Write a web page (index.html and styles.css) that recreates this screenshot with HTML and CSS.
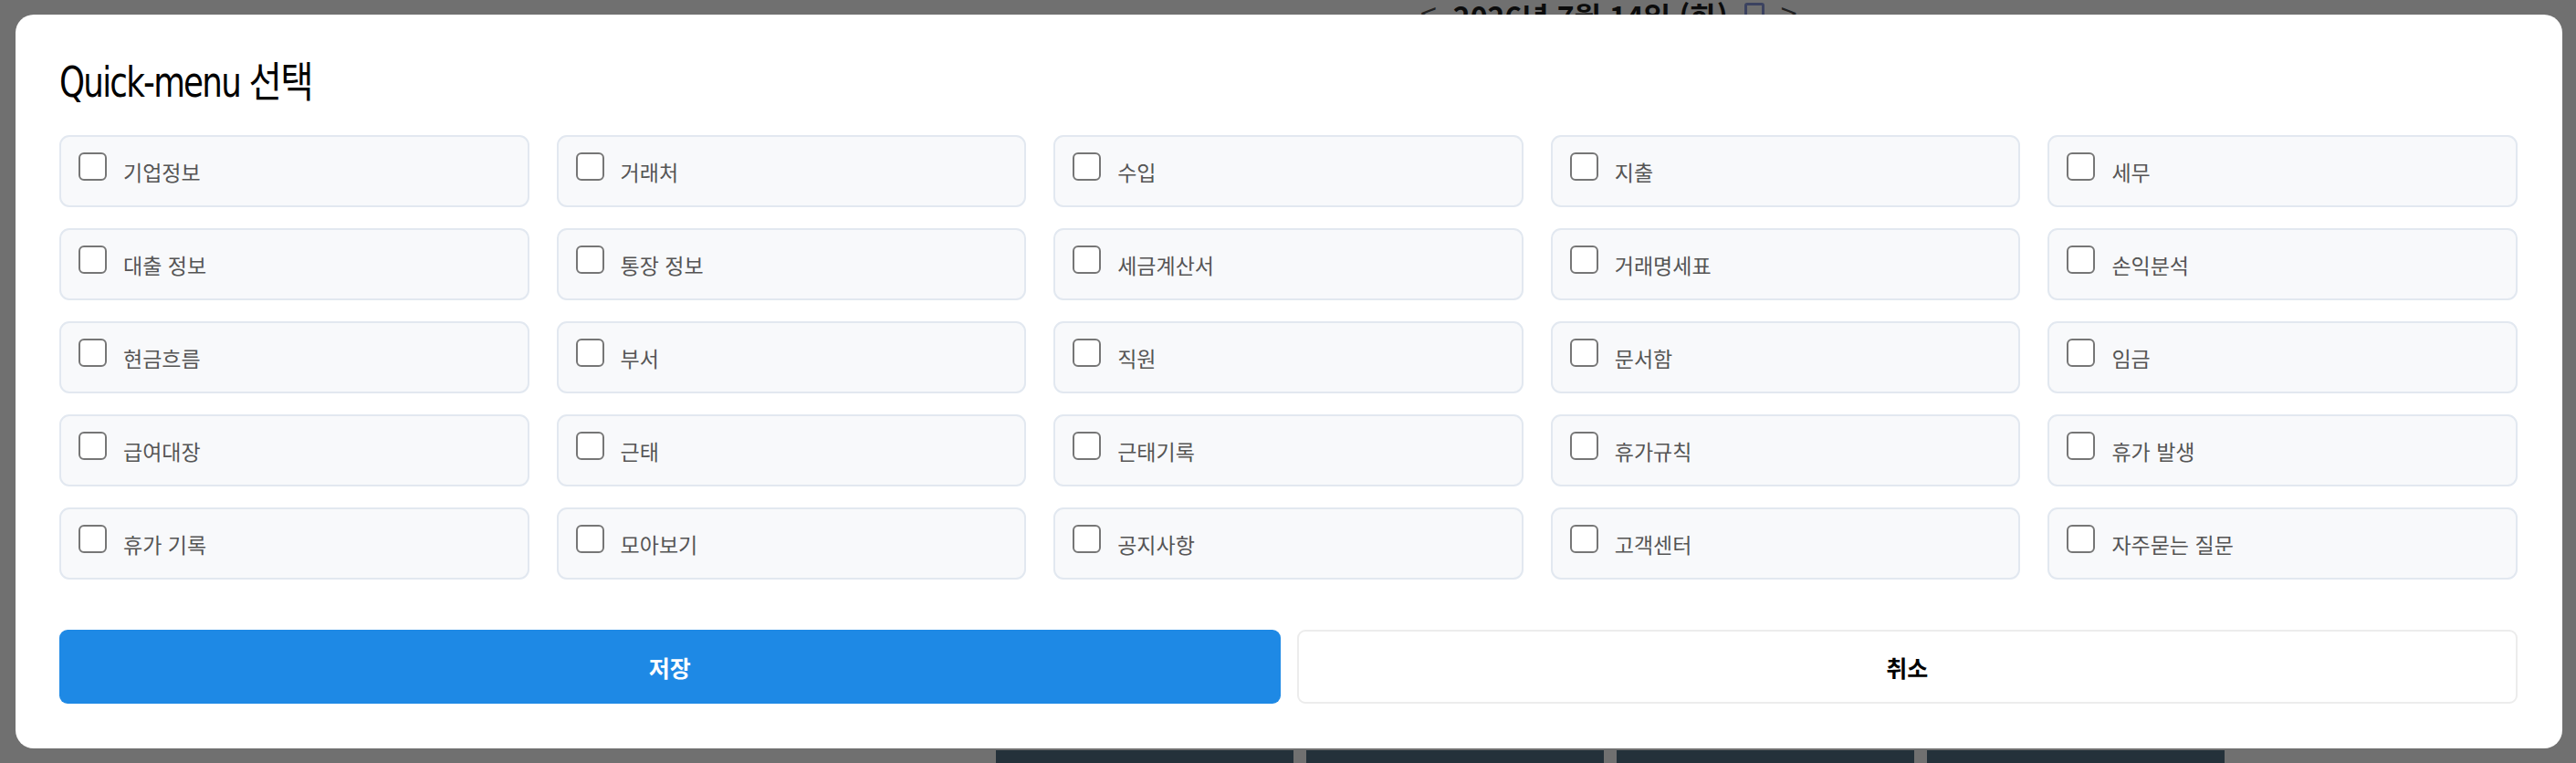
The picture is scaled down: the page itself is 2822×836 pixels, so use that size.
FILE: index.html
```html
<!DOCTYPE html>
<html lang="ko">
<head>
  <meta charset="UTF-8" />
  <meta name="viewport" content="width=device-width, initial-scale=1.0" />
  <title>Quick-menu 선택</title>
  <link rel="stylesheet" href="styles.css">
</head>
<body>
  <!-- 뒤에 깔린 화면 (어둡게 가려짐) -->
  <div class="page">
    <div class="page-header">
      <span class="nav-arrow">&lt;</span>
      <span class="page-date">2026년 7월 14일 (화)</span>
      <span class="nav-cal"></span>
      <span class="nav-arrow">&gt;</span>
    </div>
    <div class="page-footer">
      <div class="footer-box"></div>
      <div class="footer-box"></div>
      <div class="footer-box"></div>
      <div class="footer-box"></div>
    </div>
  </div>

  <div class="overlay">
    <div class="modal">
      <h2 class="modal-title">Quick-menu 선택</h2>

      <div class="menu-grid" id="menuGrid"></div>

      <div class="modal-actions">
        <button class="btn-save">저장</button>
        <button class="btn-cancel">취소</button>
      </div>
    </div>
  </div>

  <script>
    const menus = [
      "기업정보", "거래처", "수입", "지출", "세무",
      "대출 정보", "통장 정보", "세금계산서", "거래명세표", "손익분석",
      "현금흐름", "부서", "직원", "문서함", "임금",
      "급여대장", "근태", "근태기록", "휴가규칙", "휴가 발생",
      "휴가 기록", "모아보기", "공지사항", "고객센터", "자주묻는 질문"
    ];

    const grid = document.getElementById("menuGrid");
    menus.forEach((name) => {
      const item = document.createElement("label");
      item.className = "menu-item";
      item.innerHTML = `
        <input type="checkbox" />
        <span class="check-box"></span>
        <span class="menu-name">${name}</span>
      `;
      grid.appendChild(item);
    });
  </script>
</body>
</html>
```

FILE: styles.css
```css
/* 기본 */
html, body {
  margin: 0;
  height: 836px;
  overflow: hidden;
}
body {
  background-color: #707070;
  font-family: "Noto Sans CJK KR", "Noto Sans", sans-serif;
}

/* 뒤 화면 */
.page {
  height: 836px;
  display: flex;
  flex-direction: column;
  justify-content: space-between;
}
.page-header {
  display: flex;
  align-items: flex-start;
  gap: 18px;
  padding-left: 1556px;
  padding-top: 0;
  height: 44px;
  color: #0c0c0c;
  font-size: 32px;
  line-height: 34px;
  font-weight: bold;
}
.nav-arrow {
  font-weight: normal;
  color: #222;
  margin-top: -4px;
}
.nav-cal {
  width: 22px;
  height: 26px;
  margin-top: 3px;
  border: 3px solid #3b4260;
  border-radius: 3px;
  box-sizing: border-box;
}
.page-footer {
  display: flex;
  gap: 14px;
  padding-left: 1091px;
  height: 14px;
}
.footer-box {
  width: 326px;
  background-color: #24313a;
}

/* 모달 */
.overlay {
  position: fixed;
  inset: 0;
  padding: 16px 15px 16px 17px;
}
.modal {
  background-color: #ffffff;
  border-radius: 20px;
  height: 804px;
  box-sizing: border-box;
  padding: 48px 49px 49px 48px;
  display: flex;
  flex-direction: column;
}
.modal-title {
  margin: 0;
  font-family: "DejaVu Sans Condensed", "DejaVu Sans", "Noto Sans CJK KR", sans-serif;
  font-stretch: condensed;
  font-weight: normal;
  font-size: 46px;
  line-height: 52px;
  color: #000;
  letter-spacing: -2px;
  transform: scaleX(0.86);
  transform-origin: left center;
}

/* 메뉴 목록 */
.menu-grid {
  margin-top: 32px;
  display: grid;
  grid-template-columns: repeat(5, 1fr);
  gap: 23px 30px;
}
.menu-item {
  height: 79px;
  box-sizing: border-box;
  display: flex;
  align-items: center;
  gap: 18px;
  padding: 0 19px;
  background-color: #f8f9fb;
  border: 2px solid #e2e8f0;
  border-radius: 11px;
  cursor: pointer;
}
.menu-item input {
  display: none;
}
.check-box {
  width: 31px;
  height: 31px;
  box-sizing: border-box;
  border: 2.5px solid #767676;
  border-radius: 6px;
  background-color: #fff;
  margin-bottom: 11px;
  flex-shrink: 0;
}
.menu-item input:checked + .check-box {
  background-color: #1e88e5;
  border-color: #1e88e5;
}
.menu-name {
  font-size: 23px;
  color: #555;
}

/* 버튼 */
.modal-actions {
  margin-top: auto;
  display: grid;
  grid-template-columns: 1fr 1fr;
  gap: 18px;
}
.modal-actions button {
  height: 81px;
  border-radius: 9px;
  font-family: "Noto Sans CJK KR", sans-serif;
  font-size: 25px;
  font-weight: bold;
  cursor: pointer;
}
.btn-save {
  background-color: #1e89e5;
  border: none;
  color: #fff;
}
.btn-cancel {
  background-color: #fff;
  border: 2px solid #ececec;
  color: #000;
}
```
